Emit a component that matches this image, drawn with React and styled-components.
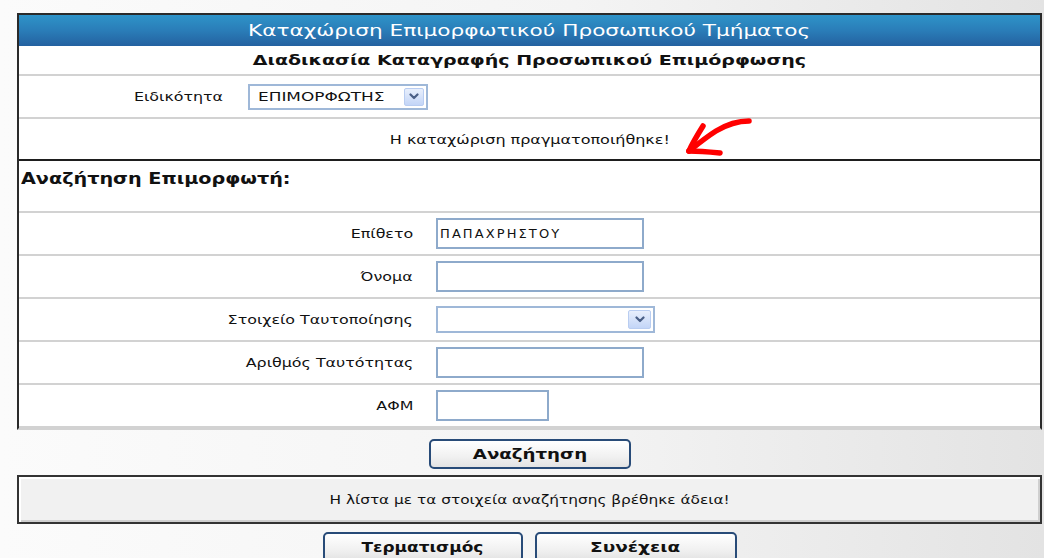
import React from 'react';
import styled, { createGlobalStyle } from 'styled-components';

const Global = createGlobalStyle`
  html, body { margin: 0; padding: 0; }
  body {
    height: 558px;
    overflow: hidden;
    background: linear-gradient(to right, #fbfbfb 0%, #f4f4f4 55%, #e3e3e3 100%);
    font-family: "DejaVu Sans", Verdana, sans-serif;
    font-size: 13px;
    color: #111;
  }
`;

const Page = styled.div`
  display: flex;
  flex-direction: column;
  padding: 13px 2px 0 17px;
`;

const Panel = styled.section`
  background: #fff;
  border: 2px solid #2a2a2a;
  border-bottom: 2px solid #d2d2d2;
`;

/* Old-style wide type: glyphs are drawn stretched sideways */
const Txt = styled.span`
  display: inline-block;
  white-space: nowrap;
  transform: scaleX(${(p) => p.$sx ?? 1.22});
  transform-origin: ${(p) => p.$origin ?? 'center'};
`;

const Header = styled.div`
  height: 31px;
  display: flex;
  align-items: center;
  justify-content: center;
  background: linear-gradient(#2e93c8, #2a7db8 50%, #2461a0);
  color: #fff;
  font-size: 15px;
`;

const SubTitle = styled.div`
  height: 28px;
  display: flex;
  align-items: center;
  justify-content: center;
  font-size: 14px;
  font-weight: bold;
  border-bottom: 2px solid #d2d2d2;
`;

const FieldRow = styled.div`
  display: grid;
  grid-template-columns: ${(p) => p.$label}px auto;
  column-gap: ${(p) => p.$gap}px;
  align-items: center;
  height: ${(p) => p.$h ?? 41}px;
  border-bottom: 2px solid #d2d2d2;
`;

const Label = styled.div`
  text-align: right;
  font-size: 13px;
`;

const Notice = styled.div`
  position: relative;
  height: 40px;
  display: flex;
  align-items: center;
  justify-content: center;
  font-size: 13px;
  border-bottom: 2px solid #1e1e1e;
`;

const Pointer = styled.svg`
  position: absolute;
  left: calc(50% + 150px);
  top: -4px;
`;

const SectionTitle = styled.div`
  height: 52px;
  box-sizing: border-box;
  padding: 8px 0 0 2px;
  font-size: 16px;
  font-weight: bold;
  border-bottom: 2px solid #d2d2d2;
`;

const Field = styled.input`
  box-sizing: border-box;
  width: ${(p) => p.$w}px;
  height: 31px;
  margin: 0;
  padding: 0 0 0 2px;
  border: 2px solid #8eaacb;
  background: #fff;
  font-family: "DejaVu Sans", Verdana, sans-serif;
  font-size: 13px;
  letter-spacing: 2.1px;
  color: #111;
  outline: none;
`;

const SelectBox = styled.div`
  position: relative;
  box-sizing: border-box;
  width: ${(p) => p.$w}px;
  height: ${(p) => p.$h}px;
  padding-left: 8px;
  display: flex;
  align-items: center;
  border: 2px solid #9fb8d8;
  background: #fff;
  font-size: 13px;
`;

const DropBtn = styled.span`
  position: absolute;
  right: 2px;
  top: 2px;
  bottom: 2px;
  width: ${(p) => p.$w ?? 20}px;
  box-sizing: border-box;
  display: flex;
  align-items: center;
  justify-content: center;
  border: 1px solid #b9cdf1;
  border-radius: 2px;
  background: linear-gradient(#e8effc, #c3d5f7);
`;

const Actions = styled.div`
  display: flex;
  justify-content: center;
  gap: 12px;
  margin-top: ${(p) => p.$top}px;
`;

const Button = styled.button`
  box-sizing: border-box;
  width: ${(p) => p.$w ?? 202}px;
  height: 30px;
  padding: 0;
  border: 2px solid #284b78;
  border-radius: 5px;
  background: linear-gradient(#ffffff, #f1f1f1 60%, #e3e3e3);
  font-family: "DejaVu Sans", Verdana, sans-serif;
  font-size: 14px;
  font-weight: bold;
  color: #111;
`;

const ResultBox = styled.div`
  margin-top: 6px;
  height: 49px;
  box-sizing: border-box;
  display: flex;
  align-items: center;
  justify-content: center;
  border: 2px solid #333;
  background: #f1f1f1;
  box-shadow: inset 2px 2px 0 #fff, inset -2px -2px 0 #cfcfcf;
  font-size: 13px;
`;

const Chevron = () => (
  <svg width="10" height="7" viewBox="0 0 10 7">
    <path d="M1.5 1.5 L5 5 L8.5 1.5" fill="none" stroke="#4a5f86" strokeWidth="2.2" strokeLinecap="round" strokeLinejoin="round" />
  </svg>
);

const Select = ({ w, h, btn, value }) => (
  <SelectBox $w={w} $h={h}>
    {value && <Txt $origin="left" $sx={1.3}>{value}</Txt>}
    <DropBtn $w={btn}>
      <Chevron />
    </DropBtn>
  </SelectBox>
);

const formRows = [
  { label: 'Επίθετο', kind: 'input', w: 208, value: 'ΠΑΠΑΧΡΗΣΤΟΥ' },
  { label: 'Όνομα', kind: 'input', w: 208 },
  { label: 'Στοιχείο Ταυτοποίησης', kind: 'select', w: 219 },
  { label: 'Αριθμός Ταυτότητας', kind: 'input', w: 208 },
  { label: 'ΑΦΜ', kind: 'input', w: 113 },
];

export default function App() {
  return (
    <>
      <Global />
      <Page>
        <Panel>
          <Header>
            <Txt $sx={1.44}>Καταχώριση Επιμορφωτικού Προσωπικού Τμήματος</Txt>
          </Header>
          <SubTitle>
            <Txt $sx={1.36}>Διαδικασία Καταγραφής Προσωπικού Επιμόρφωσης</Txt>
          </SubTitle>
          <FieldRow $label={204} $gap={25}>
            <Label>
              <Txt $origin="right">Ειδικότητα</Txt>
            </Label>
            <Select w={180} h={26} btn={20} value="ΕΠΙΜΟΡΦΩΤΗΣ" />
          </FieldRow>
          <Notice>
            <Txt $sx={1.23}>Η καταχώριση πραγματοποιήθηκε!</Txt>
            <Pointer width="76" height="44" viewBox="0 0 76 44">
              <g fill="none" stroke="#ff0000" strokeWidth="5.5" strokeLinecap="round" strokeLinejoin="round">
                <path d="M69 6 C58 6 46 10 36 16 C28 21 19 28 9 36" />
                <path d="M23 11 C18 19 13 27 9 36" />
                <path d="M9 36 C19 36 30 37 40 38" />
              </g>
            </Pointer>
          </Notice>
          <SectionTitle>
            <Txt $origin="left" $sx={1.2}>Αναζήτηση Επιμορφωτή:</Txt>
          </SectionTitle>
          {formRows.map((r) => (
            <FieldRow key={r.label} $label={394} $gap={23}>
              <Label>
                <Txt $origin="right">{r.label}</Txt>
              </Label>
              <div>
                {r.kind === 'input' ? (
                  <Field $w={r.w} defaultValue={r.value ?? ''} />
                ) : (
                  <Select w={r.w} h={27} btn={23} />
                )}
              </div>
            </FieldRow>
          ))}
        </Panel>
        <Actions $top={9}>
          <Button>
            <Txt $sx={1.3}>Αναζήτηση</Txt>
          </Button>
        </Actions>
        <ResultBox>
          <Txt $sx={1.18}>Η λίστα με τα στοιχεία αναζήτησης βρέθηκε άδεια!</Txt>
        </ResultBox>
        <Actions $top={8}>
          <Button $w={200}>
            <Txt $sx={1.21}>Τερματισμός</Txt>
          </Button>
          <Button $w={202}>
            <Txt $sx={1.32}>Συνέχεια</Txt>
          </Button>
        </Actions>
      </Page>
    </>
  );
}
